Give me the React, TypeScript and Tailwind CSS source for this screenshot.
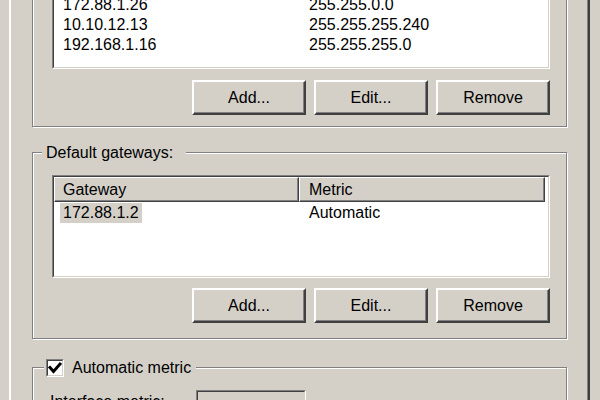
import React from "react";

function Btn({ children }: { children: React.ReactNode }) {
  return (
    <div className="w-[114px] h-[35px] flex items-center justify-center border-2 border-t-white border-l-white border-b-[#404040] border-r-[#404040] shadow-[inset_-1px_-1px_0_#808080] bg-[#d4d0c8] leading-[20px]">
      {children}
    </div>
  );
}

function Sunken({ children, className, inner }: { children?: React.ReactNode; className: string; inner: string }) {
  return (
    <div className={"border border-t-[#808080] border-l-[#808080] border-b-white border-r-white " + className}>
      <div className={"h-full border border-t-[#404040] border-l-[#404040] border-b-[#d4d0c8] border-r-[#d4d0c8] overflow-hidden " + inner}>
        {children}
      </div>
    </div>
  );
}

function HeaderCell({ children, w }: { children?: React.ReactNode; w: string }) {
  return (
    <div className={"h-[25px] flex items-center border border-t-white border-l-white border-b-[#404040] border-r-[#404040] shadow-[inset_-1px_-1px_0_#808080] bg-[#d4d0c8] pl-[8px] " + w}>
      {children}
    </div>
  );
}

function Header({ a, b }: { a?: string; b?: string }) {
  return (
    <div className="flex">
      <HeaderCell w="w-[245px]">{a}</HeaderCell>
      <HeaderCell w="w-[246px] pl-[9px]">{b}</HeaderCell>
    </div>
  );
}

function Row({ a, b }: { a: string; b: string }) {
  return (
    <div className="flex h-[20px] leading-[20px]">
      <div className="w-[245px] pl-[9px]">{a}</div>
      <div className="pl-[10px]">{b}</div>
    </div>
  );
}

const groupCls =
  "relative shrink-0 ml-[21px] w-[535px] border border-[#808080] shadow-[inset_1px_1px_0_#ffffff,1px_1px_0_#ffffff]";

export default function App() {
  return (
    <div className="w-[600px] h-[400px] overflow-hidden bg-[#d4d0c8] font-['Liberation_Sans',Arial,sans-serif] text-[16px] leading-[20px] text-black">
      <div className="ml-[9px] w-[581px] h-[400px] flex flex-col border-l-2 border-l-white border-r-2 border-r-[#404040] shadow-[inset_-1px_0_0_#808080]">
        {/* IP addresses group */}
        <div className={groupCls + " mt-[-40px] pt-[7px] pl-[19px] pr-[16px] pb-[11px]"}>
          <Sunken className="h-[101px]" inner="bg-white">
            <Header />
            <Row a="172.88.1.26" b="255.255.0.0" />
            <Row a="10.10.12.13" b="255.255.255.240" />
            <Row a="192.168.1.16" b="255.255.255.0" />
          </Sunken>
          <div className="mt-[11px] flex justify-end gap-[8px]">
            <Btn>Add...</Btn>
            <Btn>Edit...</Btn>
            <Btn>Remove</Btn>
          </div>
        </div>

        {/* Default gateways group */}
        <div className={groupCls + " mt-[25px] pt-[22px] pl-[19px] pr-[16px] pb-[15px]"}>
          <div className="absolute left-[9px] top-[-10px] bg-[#d4d0c8] pl-[4px] pr-[13px] leading-[20px]">
            Default gateways:
          </div>
          <Sunken className="h-[103px]" inner="bg-white">
            <Header a="Gateway" b="Metric" />
            <div className="flex h-[20px] leading-[20px] mt-[1px]">
              <div className="w-[245px] pl-[6px]">
                <span className="inline-block bg-[#d4d0c8] px-[3px]">172.88.1.2</span>
              </div>
              <div className="pl-[10px]">Automatic</div>
            </div>
          </Sunken>
          <div className="mt-[10px] flex justify-end gap-[8px]">
            <Btn>Add...</Btn>
            <Btn>Edit...</Btn>
            <Btn>Remove</Btn>
          </div>
        </div>

        {/* Automatic metric group */}
        <div className={groupCls + " mt-[28px] pt-[22px] pl-[17px] pr-[16px] pb-[15px]"}>
          <div className="absolute left-[11px] top-[-10px] h-[20px] flex items-center gap-[8px] bg-[#d4d0c8] pl-[2px] pr-[5px]">
            <div className="w-[18px] h-[18px] border border-t-[#808080] border-l-[#808080] border-b-white border-r-white">
              <div className="w-full h-full border border-t-[#404040] border-l-[#404040] border-b-[#d4d0c8] border-r-[#d4d0c8] bg-white flex items-center justify-center">
                <svg width="14" height="14" viewBox="0 0 14 14">
                  <polyline points="2,6.5 5.5,10.5 12,3" fill="none" stroke="#000" strokeWidth="3" strokeLinecap="square" strokeLinejoin="miter" />
                </svg>
              </div>
            </div>
            <span className="leading-[20px]">Automatic metric</span>
          </div>
          <div className="flex items-start">
            <div className="w-[146px] mt-[2px] leading-[20px]">Interface metric:</div>
            <Sunken className="w-[110px] h-[28px]" inner="bg-[#d4d0c8]" />
          </div>
        </div>
      </div>
    </div>
  );
}
